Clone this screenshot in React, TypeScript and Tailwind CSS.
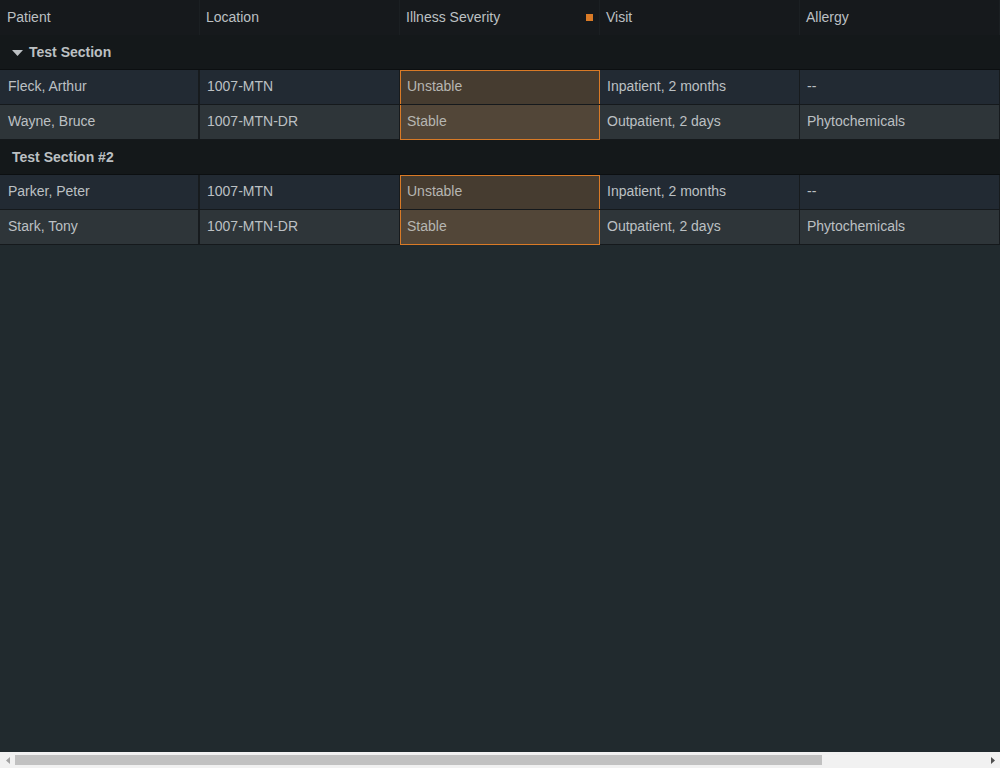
import React from "react";

type Row = { patient: string; location: string; severity: string; visit: string; allergy: string };

const sections: { title: string; caret: boolean; rows: Row[] }[] = [
  {
    title: "Test Section",
    caret: true,
    rows: [
      { patient: "Fleck, Arthur", location: "1007-MTN", severity: "Unstable", visit: "Inpatient, 2 months", allergy: "--" },
      { patient: "Wayne, Bruce", location: "1007-MTN-DR", severity: "Stable", visit: "Outpatient, 2 days", allergy: "Phytochemicals" },
    ],
  },
  {
    title: "Test Section #2",
    caret: false,
    rows: [
      { patient: "Parker, Peter", location: "1007-MTN", severity: "Unstable", visit: "Inpatient, 2 months", allergy: "--" },
      { patient: "Stark, Tony", location: "1007-MTN-DR", severity: "Stable", visit: "Outpatient, 2 days", allergy: "Phytochemicals" },
    ],
  },
];

export default function App() {
  return (
    <div className="h-screen w-full flex flex-col overflow-hidden bg-[#212a2e] font-['Liberation_Sans',Arial,sans-serif] text-[14px] text-[#bcc0c3]">
      <div className="flex-1 overflow-hidden">
        <div className="w-[1200px]">
          {/* Header */}
          <div className="flex h-[35px] bg-[#16191c]">
            <div className="w-[200px] flex items-center pl-[7px] border-r border-[#1b1f22]">Patient</div>
            <div className="w-[200px] flex items-center pl-[6px] border-r border-[#1b1f22]">Location</div>
            <div className="w-[200px] flex items-center justify-between pl-[6px] pr-[6px] border-r border-[#1b1f22]">
              <span>Illness Severity</span>
              <span className="w-[7px] h-[7px] bg-[#d97a26]" />
            </div>
            <div className="w-[200px] flex items-center pl-[6px] border-r border-[#1b1f22]">Visit</div>
            <div className="w-[200px] flex items-center pl-[6px] border-r border-[#1b1f22]">Allergy</div>
            <div className="w-[200px]" />
          </div>

          {sections.map((s) => (
            <div key={s.title}>
              <div className="flex items-center h-[35px] bg-[#14181a] border-b border-[#0c0f11] font-bold pl-[12px] gap-[6px]">
                {s.caret && (
                  <svg width="11" height="6" viewBox="0 0 11 6" className="mt-[2px]">
                    <path d="M0 0 H11 L5.5 6 Z" fill="#bcc0c3" />
                  </svg>
                )}
                <span>{s.title}</span>
              </div>
              {s.rows.map((r, i) => {
                const bg = i % 2 === 0 ? "bg-[#222a33]" : "bg-[#2e3539]";
                const sev = i % 2 === 0 ? "bg-[#463c30]" : "bg-[#524638]";
                const last = i === s.rows.length - 1;
                return (
                  <div key={r.patient} className="flex h-[35px] border-b border-[#15191c]">
                    <div className={`w-[200px] flex items-center pl-[8px] pb-[2px] border-r-2 border-[#171b1e] ${bg}`}>{r.patient}</div>
                    <div className={`w-[200px] flex items-center pl-[7px] pb-[2px] border-r border-[#171b1e] ${bg}`}>{r.location}</div>
                    <div
                      className={`w-[200px] flex items-center pl-[6px] pb-[2px] border-x border-[#d97a26] text-[#b6b6b2] ${sev} ${i === 0 ? "border-t" : ""} ${last ? "border-b -mb-px" : ""}`}
                    >
                      {r.severity}
                    </div>
                    <div className={`w-[200px] flex items-center pl-[7px] pb-[2px] border-r border-[#171b1e] ${bg}`}>{r.visit}</div>
                    <div className={`w-[200px] flex items-center pl-[7px] pb-[2px] border-r border-[#171b1e] ${bg}`}>{r.allergy}</div>
                    <div className={`w-[200px] ${bg}`} />
                  </div>
                );
              })}
            </div>
          ))}
        </div>
      </div>

      {/* Horizontal scrollbar */}
      <div className="h-[16px] shrink-0 flex items-center bg-[#f1f1f1]">
        <div className="w-[15px] flex justify-center">
          <svg width="4" height="7" viewBox="0 0 4 7">
            <path d="M4 0 V7 L0 3.5 Z" fill="#a3a3a3" />
          </svg>
        </div>
        <div className="flex-1 h-[10px]">
          <div className="w-[807px] h-full bg-[#c1c1c1]" />
        </div>
        <div className="w-[15px] flex justify-center">
          <svg width="4" height="7" viewBox="0 0 4 7">
            <path d="M0 0 V7 L4 3.5 Z" fill="#505050" />
          </svg>
        </div>
      </div>
    </div>
  );
}
